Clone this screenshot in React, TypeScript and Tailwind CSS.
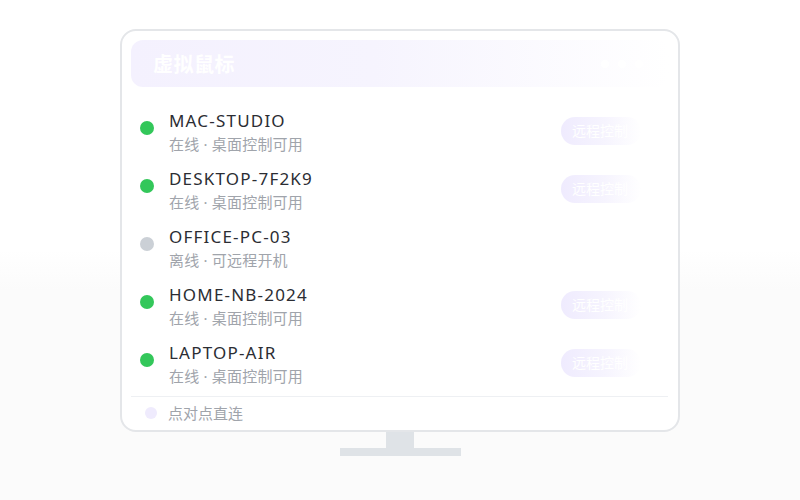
const devices = [
  { name: "MAC-STUDIO", online: true, note: "在线 · 桌面控制可用" },
  { name: "DESKTOP-7F2K9", online: true, note: "在线 · 桌面控制可用" },
  { name: "OFFICE-PC-03", online: false, note: "离线 · 可远程开机" },
  { name: "HOME-NB-2024", online: true, note: "在线 · 桌面控制可用" },
  { name: "LAPTOP-AIR", online: true, note: "在线 · 桌面控制可用" },
];

const font = "font-['Noto_Sans','Noto_Sans_CJK_SC',sans-serif]";

export default function App() {
  return (
    <div className={`w-[800px] h-[500px] flex flex-col items-center pt-[29px] bg-[linear-gradient(to_bottom,#ffffff_50%,#fbfbfb_58%,#fbfbfb)] ${font}`}>
      <div className="w-[560px] h-[403px] rounded-[16px] border-2 border-[#e4e6e9] bg-white flex flex-col px-[9px] pt-[9px]">
        <div className="h-[47px] shrink-0 rounded-[12px] bg-[linear-gradient(to_right,#f4f1fe,#f6f4fe_45%,#ffffff)] flex items-center justify-between pl-[22px] pr-[26px]">
          <span className="text-[20px] font-bold text-white leading-none mt-[3px] tracking-[0.5px]">虚拟鼠标</span>
          <div className="flex gap-[9px]">
            <span className="w-[8px] h-[8px] rounded-full bg-white" />
            <span className="w-[8px] h-[8px] rounded-full bg-white" />
            <span className="w-[8px] h-[8px] rounded-full bg-white" />
          </div>
        </div>
        <div className="mt-[17px] flex flex-col">
          {devices.map((d) => (
            <div key={d.name} className="flex items-start py-[6px] pl-[9px] pr-[28px]">
              <span className={`w-[14px] h-[14px] rounded-full mt-[11px] ${d.online ? "bg-[#33c75a]" : "bg-[#cbd0d6]"}`} />
              <div className="ml-[15px] flex flex-col flex-1">
                <span className="text-[17px] leading-[22px] tracking-[1.2px] text-[#2b2d33]">{d.name}</span>
                <span className="text-[15px] leading-[24px] tracking-[0.2px] text-[#a0a4ab]">{d.note}</span>
              </div>
              {d.online && (
                <span className="w-[80px] h-[28px] mt-[7px] rounded-full bg-[linear-gradient(to_right,#efebfe,#f6f4fe_55%,#ffffff)] text-white text-[14px] leading-[28px] pl-[11px] overflow-hidden whitespace-nowrap">
                  远程控制
                </span>
              )}
            </div>
          ))}
        </div>
        <div className="mt-[2px] border-t border-[#eef0f3] flex items-center h-[33px] pl-[14px] mr-[1px]">
          <span className="w-[12px] h-[12px] rounded-full bg-[#efebfd]" />
          <span className="ml-[11px] text-[15px] text-[#a0a4ab]">点对点直连</span>
        </div>
      </div>
      <div className="w-[28px] h-[16px] bg-[#dfe3e7]" />
      <div className="w-[121px] h-[8px] bg-[#dfe3e7]" />
    </div>
  );
}
